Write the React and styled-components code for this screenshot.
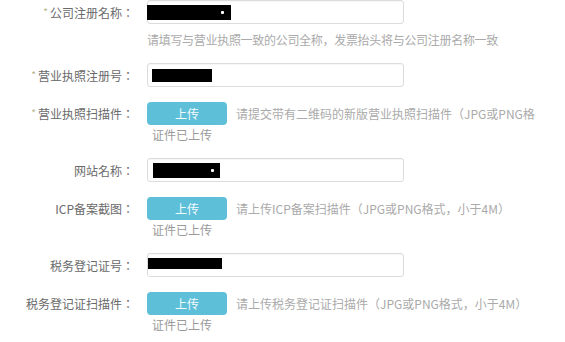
import React from "react";
import styled, { createGlobalStyle } from "styled-components";

const Global = createGlobalStyle`
  html, body { margin: 0; padding: 0; background: #ffffff; }
  body {
    font-family: "Noto Sans CJK SC", "Liberation Sans", sans-serif;
    font-size: 12px;
    color: #666;
  }
`;

const Form = styled.div`
  display: flex;
  flex-direction: column;
  gap: 15px;
  width: 565px;
  overflow: hidden;
`;

const Row = styled.div`
  display: grid;
  grid-template-columns: 134px 388px;
  column-gap: 13px;
  align-items: start;
`;

const Label = styled.div`
  height: ${(p) => (p.$button ? "23px" : "24px")};
  display: flex;
  align-items: center;
  justify-content: flex-end;
  font-family: "Noto Sans CJK JP", "Noto Sans CJK SC", sans-serif;
  font-size: 12px;
  color: #6a6a6a;
  white-space: nowrap;
`;

const Star = styled.span`
  font-size: 10px;
  color: #b5b58a;
  margin-right: 2px;
  position: relative;
  top: -1px;
`;

const Field = styled.div`
  display: flex;
  flex-direction: column;
  min-width: 0;
  overflow: hidden;
`;

const TextBox = styled.div`
  box-sizing: border-box;
  width: 257px;
  height: 24px;
  border: 1px solid #dcdcdc;
  border-radius: 3px;
  background: #fff;
  box-shadow: inset 0 1px 1px rgba(0, 0, 0, 0.04);
  display: flex;
  align-items: center;
`;

const Mask = styled.span`
  display: block;
  position: relative;
  background: #000;
  width: ${(p) => p.$w}px;
  height: ${(p) => p.$h}px;
  margin-left: ${(p) => p.$ml}px;
  margin-top: ${(p) => p.$mt || 0}px;
`;

const Dot = styled.span`
  position: absolute;
  right: ${(p) => p.$r}px;
  top: 50%;
  width: 3px;
  height: 3px;
  margin-top: -1px;
  background: #fff;
  border-radius: 1px;
`;

const Hint = styled.div`
  margin-top: 8px;
  line-height: 16px;
  color: #aaaaaa;
  white-space: nowrap;
  letter-spacing: -0.3px;
`;

const UploadLine = styled.div`
  display: flex;
  align-items: center;
  gap: 9px;
  white-space: nowrap;
  overflow: hidden;
`;

const UploadButton = styled.button`
  flex: none;
  width: 80px;
  height: 23px;
  border: none;
  border-radius: 4px;
  background: #5ebfd9;
  color: #f2fbfd;
  font-family: inherit;
  font-size: 12px;
  padding: 0;
  cursor: pointer;
`;

const UploadHint = styled.span`
  color: #aaaaaa;
  line-height: 16px;
`;

const Uploaded = styled.div`
  margin-top: 2px;
  margin-left: 5px;
  line-height: 16px;
  color: #9a9a9a;
`;

function InputRow({ label, required, mask, hint }) {
  return (
    <Row>
      <Label>
        {required && <Star>*</Star>}
        {label}：
      </Label>
      <Field>
        <TextBox>
          <Mask $w={mask.w} $h={mask.h} $ml={mask.ml} $mt={mask.mt}>
            {mask.dot != null && <Dot $r={mask.dot} />}
          </Mask>
        </TextBox>
        {hint && <Hint>{hint}</Hint>}
      </Field>
    </Row>
  );
}

function UploadRow({ label, required, hint }) {
  return (
    <Row>
      <Label $button>
        {required && <Star>*</Star>}
        {label}：
      </Label>
      <Field>
        <UploadLine>
          <UploadButton>上传</UploadButton>
          <UploadHint>{hint}</UploadHint>
        </UploadLine>
        <Uploaded>证件已上传</Uploaded>
      </Field>
    </Row>
  );
}

export default function App() {
  return (
    <>
      <Global />
      <Form>
        <InputRow
          required
          label="公司注册名称"
          mask={{ w: 84, h: 15, ml: -1, dot: 7 }}
          hint="请填写与营业执照一致的公司全称，发票抬头将与公司注册名称一致"
        />
        <InputRow required label="营业执照注册号" mask={{ w: 60, h: 13, ml: 4 }} />
        <UploadRow
          required
          label="营业执照扫描件"
          hint="请提交带有二维码的新版营业执照扫描件（JPG或PNG格式，小于4M）"
        />
        <InputRow label="网站名称" mask={{ w: 67, h: 15, ml: 5, dot: 6 }} />
        <UploadRow label="ICP备案截图" hint="请上传ICP备案扫描件（JPG或PNG格式，小于4M）" />
        <InputRow label="税务登记证号" mask={{ w: 74, h: 11, ml: 0, mt: -4 }} />
        <UploadRow
          label="税务登记证扫描件"
          hint="请上传税务登记证扫描件（JPG或PNG格式，小于4M）"
        />
      </Form>
    </>
  );
}
